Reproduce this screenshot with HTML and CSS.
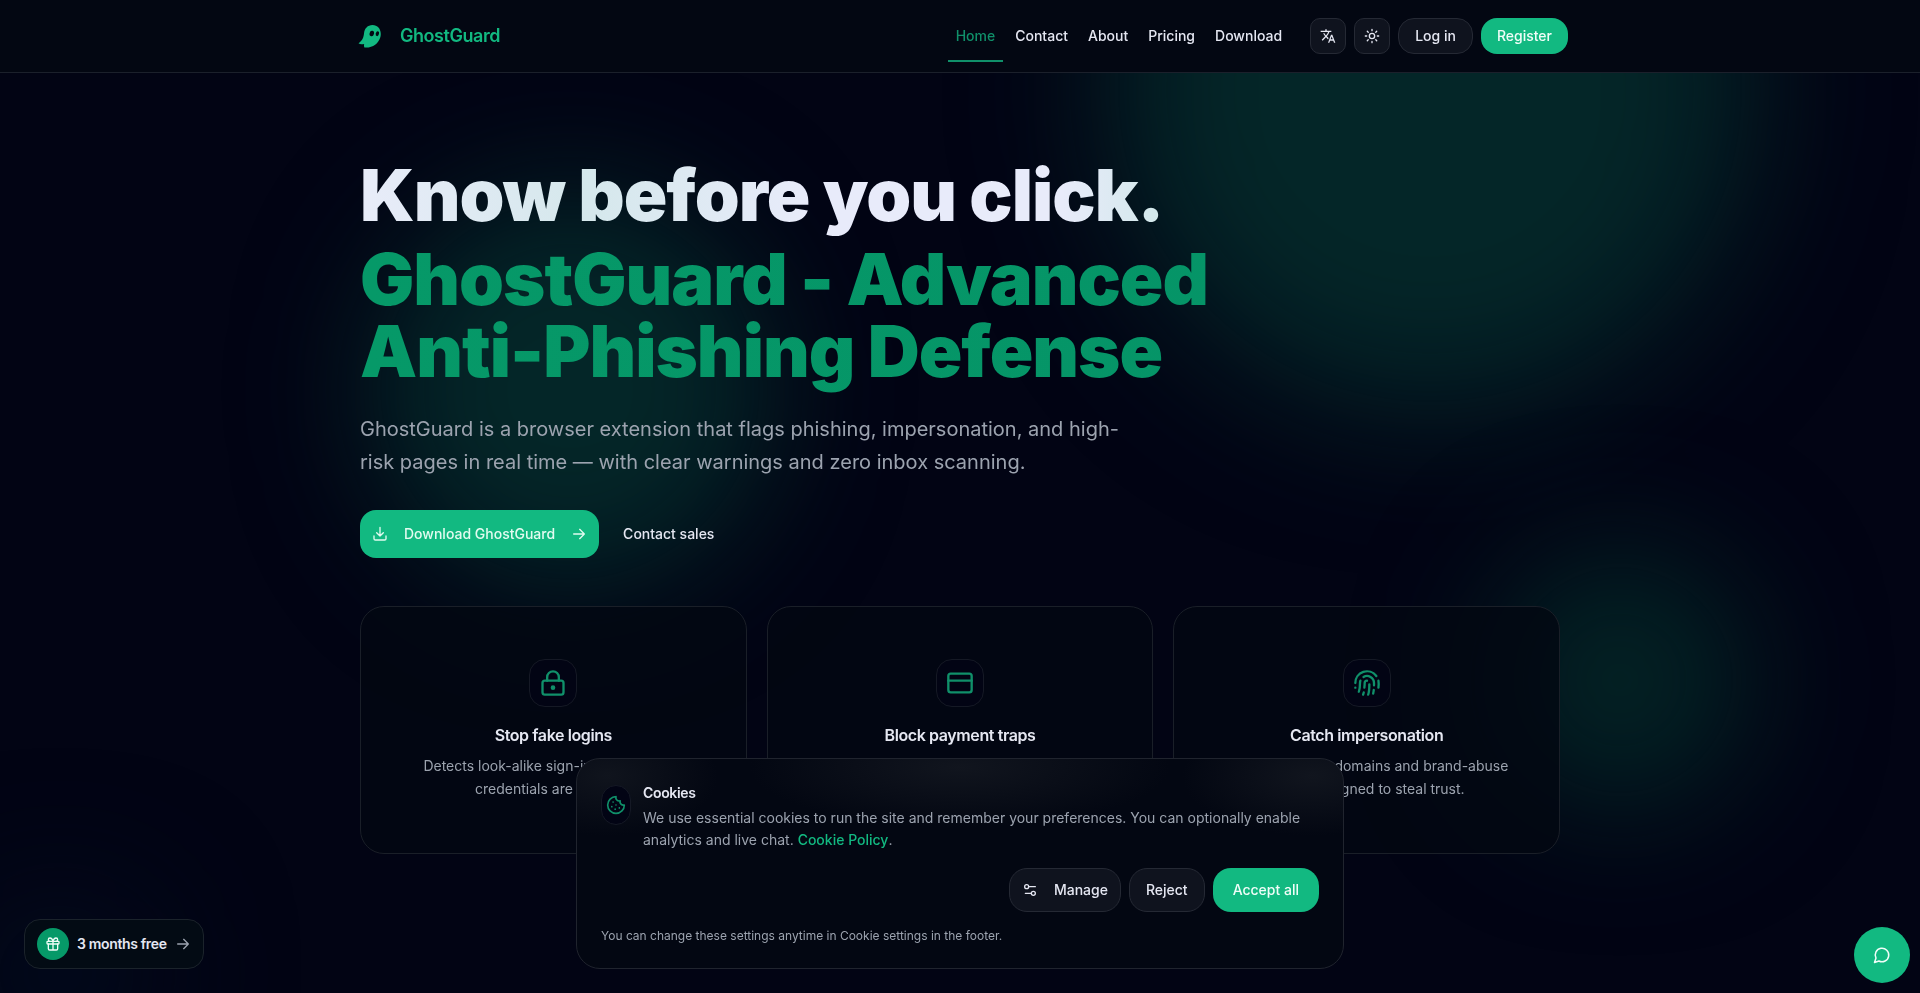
FILE: index.html
```html
<!DOCTYPE html>
<html lang="en">
<head>
	<meta charset="utf-8">
	<title>GhostGuard</title>
	<meta name="viewport" content="width=device-width, initial-scale=1">
	<link rel="stylesheet" href="styles.css">
</head>
<body>

	<!-- background glows -->
	<div class="glows" aria-hidden="true">
		<div class="glow glow-top"></div>
		<div class="glow glow-left"></div>
		<div class="glow glow-right"></div>
		<div class="glow glow-corner"></div>
	</div>

	<header class="header">
		<div class="header-inner">
			<a class="brand" href="#">
				<svg width="24" height="24" viewBox="0 0 24 24">
					<path fill="currentColor" d="M14.500 1C9.600 1 6.500 4.500 6 9.500C5.700 13 4.500 16.500 0.500 19.300C2 20.500 4 20.500 6.200 19.900C5.900 21 5.800 22.300 6.400 23.500C14 24.300 20.500 20 22.400 13C24 6.500 20.500 1 14.500 1Z"/>
					<ellipse fill="#030712" cx="13.800" cy="9.500" rx="2.200" ry="2.800" transform="rotate(15 13.800 9.500)"/>
					<ellipse fill="#030712" cx="19.400" cy="9.700" rx="1.600" ry="2.500" transform="rotate(15 19.400 9.700)"/>
				</svg>
				<span>GhostGuard</span>
			</a>
			<nav class="nav">
				<a class="active" href="#">Home</a>
				<a href="#">Contact</a>
				<a href="#">About</a>
				<a href="#">Pricing</a>
				<a href="#">Download</a>
			</nav>
			<div class="actions">
				<button class="btn btn-icon" type="button" aria-label="Language">
					<svg width="16" height="16" viewBox="0 0 24 24" fill="currentColor"><path d="M12.870 15.070l-2.540-2.510.03-.03A17.520 17.520 0 0 0 14.070 6H17V4h-7V2H8v2H1v1.990h11.170C11.500 7.920 10.440 9.750 9 11.350 8.070 10.320 7.300 9.190 6.690 8h-2c.73 1.630 1.730 3.170 2.980 4.560l-5.090 5.020L4 19l5-5 3.110 3.110.76-2.040zM18.500 10h-2L12 22h2l1.120-3h4.750L21 22h2l-4.500-12zm-2.620 7l1.620-4.330L19.120 17h-3.240z"/></svg>
				</button>
				<button class="btn btn-icon" type="button" aria-label="Theme">
					<svg class="line" width="16" height="16" viewBox="0 0 24 24"><circle cx="12" cy="12" r="4"/><path d="M12 2v2M12 20v2M4.930 4.930l1.410 1.410M17.660 17.660l1.410 1.410M2 12h2M20 12h2M6.340 17.660l-1.410 1.410M19.070 4.930l-1.410 1.410"/></svg>
				</button>
				<button class="btn" type="button">Log in</button>
				<button class="btn btn-primary" type="button">Register</button>
			</div>
		</div>
	</header>

	<main class="main">
		<h1 class="title">
			<span class="title-lead">Know before you click.</span>
			<span class="title-brand">GhostGuard - Advanced Anti-Phishing Defense</span>
		</h1>
		<p class="intro">GhostGuard is a browser extension that flags phishing, impersonation, and high-risk pages in real time — with clear warnings and zero inbox scanning.</p>
		<div class="cta">
			<a class="download" href="#">
				<svg class="line" width="16" height="16" viewBox="0 0 24 24"><path d="M12 2v13M7 10l5 5 5-5M3 15v4a2 2 0 0 0 2 2h14a2 2 0 0 0 2-2v-4"/></svg>
				<span>Download GhostGuard</span>
				<svg class="line" width="16" height="16" viewBox="0 0 24 24"><path d="M4 12h16M13 5l7 7-7 7"/></svg>
			</a>
			<a class="sales" href="#">Contact sales</a>
		</div>

		<section class="cards">
			<article class="card">
				<div class="card-icon">
					<svg class="line" width="28" height="28" viewBox="0 0 24 24"><rect x="3" y="10" width="18" height="12" rx="2"/><path d="M7 10V7a5 5 0 0 1 10 0v3"/><circle cx="12" cy="16" r="1"/></svg>
				</div>
				<h2>Stop fake logins</h2>
				<p>Detects look-alike sign-in pages before credentials are entered.</p>
			</article>
			<article class="card">
				<div class="card-icon">
					<svg class="line" width="28" height="28" viewBox="0 0 24 24"><rect x="2" y="4" width="20" height="16" rx="2"/><path d="M2 10h20"/></svg>
				</div>
				<h2>Block payment traps</h2>
				<p>Flags checkout scams and fake payment pages in real time.</p>
			</article>
			<article class="card">
				<div class="card-icon">
					<svg class="line" width="28" height="28" viewBox="0 0 24 24"><path d="M12 10a2 2 0 0 0-2 2c0 1.020-.1 2.510-.26 4M14 13.120c0 2.380 0 6.380-1 8.880M17.290 21.020c.12-.6.43-2.300.5-3.020M2 12a10 10 0 0 1 18-6M2 16h.01M21.800 16c.2-2 .131-5.354 0-6M5 19.500C5.500 18 6 15 6 12a6 6 0 0 1 .34-2M8.650 22c.21-.66.45-1.320.57-2M9 6.800a6 6 0 0 1 9 5.200v2"/></svg>
				</div>
				<h2>Catch impersonation</h2>
				<p>Spots look-alike domains and brand-abuse pages designed to steal trust.</p>
			</article>
		</section>
	</main>

	<section class="cookies" aria-label="Cookies">
		<div class="cookies-text">
			<div class="cookies-icon">
				<svg class="line" width="20" height="20" viewBox="0 0 24 24"><path d="M12 2a10 10 0 1 0 10 10 4 4 0 0 1-5-5 4 4 0 0 1-5-5M8.500 8.500v.01M16 15.500v.01M12 12v.01M11 17v.01M7 14v.01"/></svg>
			</div>
			<div>
				<h2>Cookies</h2>
				<p>We use essential cookies to run the site and remember your preferences. You can optionally enable analytics and live chat. <a href="#">Cookie Policy</a>.</p>
			</div>
		</div>
		<div class="cookies-actions">
			<button class="btn btn-large btn-manage" type="button">
				<svg class="line" width="16" height="16" viewBox="0 0 24 24"><path d="M20 7h-9M14 17H5"/><circle cx="17" cy="17" r="3"/><circle cx="7" cy="7" r="3"/></svg>
				Manage
			</button>
			<button class="btn btn-large" type="button">Reject</button>
			<button class="btn btn-large btn-primary" type="button">Accept all</button>
		</div>
		<p class="cookies-note">You can change these settings anytime in Cookie settings in the footer.</p>
	</section>

	<a class="offer" href="#">
		<span class="offer-icon">
			<svg class="line" width="16" height="16" viewBox="0 0 24 24"><rect x="3" y="8" width="18" height="4" rx="1"/><path d="M12 8v13M19 12v7a2 2 0 0 1-2 2H7a2 2 0 0 1-2-2v-7M7.500 8a2.500 2.500 0 0 1 0-5A4.800 8 0 0 1 12 8a4.800 8 0 0 1 4.500-5 2.500 2.500 0 0 1 0 5"/></svg>
		</span>
		<span>3 months free</span>
		<svg class="line offer-arrow" width="16" height="16" viewBox="0 0 24 24"><path d="M4 12h16M13 5l7 7-7 7"/></svg>
	</a>

	<button class="chat" type="button" aria-label="Chat">
		<svg class="line" width="18" height="18" viewBox="0 0 24 24"><path d="M7.900 20A9 9 0 1 0 4 16.100L2 22Z"/></svg>
	</button>

</body>
</html>
```
FILE: styles.css
```css
*{
	box-sizing: border-box;
}
body{
	margin: 0;
	min-height: 100vh;
	overflow: hidden;
	background-color: #020414;
	color: #e5e7f2;
	font: 14px/20px Inter, "Liberation Sans", sans-serif;
}
h1, h2, p{
	margin: 0;
}
a{
	color: inherit;
	text-decoration: none;
}
svg{
	flex: none;
}
.line{
	fill: none;
	stroke: currentColor;
	stroke-width: 2;
	stroke-linecap: round;
	stroke-linejoin: round;
}

/* background glows */
.glows{
	position: fixed;
	inset: 0;
	z-index: -1;
	overflow: hidden;
}
.glow{
	position: absolute;
	border-radius: 50%;
	background-color: #042628;
	filter: blur(64px);
}
.glow-top{
	top: -230px;
	right: 170px;
	width: 640px;
	height: 640px;
	filter: blur(72px);
}
.glow-left{
	top: 190px;
	left: 370px;
	width: 400px;
	height: 400px;
}
.glow-right{
	top: 550px;
	right: 170px;
	width: 260px;
	height: 260px;
	background-color: #032224;
}
.glow-corner{
	bottom: -60px;
	left: -40px;
	width: 200px;
	height: 160px;
	background-color: #020a1c;
}

/* header */
.header{
	border-bottom: 1px solid #1b202b;
	background-color: #030712;
}
.header-inner{
	display: flex;
	align-items: center;
	max-width: 1216px;
	height: 72px;
	margin: 0 auto;
	padding: 0 0 0 6px;
}
.brand{
	display: flex;
	align-items: center;
	gap: 18px;
	color: #12b981;
	font-size: 18px;
	font-weight: 600;
	letter-spacing: -0.025em;
}
.nav{
	display: flex;
	gap: 4px;
	margin-left: auto;
	font-weight: 500;
}
.nav a{
	padding: 14px 8px;
	border-bottom: 2px solid transparent;
	margin-top: 2px;
}
.nav .active{
	border-color: #10906a;
	color: #10906a;
}
.actions{
	display: flex;
	gap: 8px;
	margin-left: 20px;
}
.btn{
	display: inline-flex;
	align-items: center;
	justify-content: center;
	height: 36px;
	padding: 0 16px;
	border: 1px solid #252934;
	border-radius: 16px;
	background-color: #0f131e;
	color: #e5e7f2;
	font: inherit;
	font-weight: 500;
}
.btn-icon{
	width: 36px;
	padding: 0;
	border-radius: 10px;
}
.btn-primary{
	padding: 0 16px;
	border: 0;
	background-color: #12b981;
	color: #f0fdf8;
}
.btn-large{
	height: 44px;
	border-radius: 18px;
}
.btn-large.btn-primary{
	padding: 0 20px;
}
.btn-manage{
	gap: 16px;
	padding: 0 12px;
}

/* hero */
.main{
	max-width: 1200px;
	margin: 0 auto;
	padding: 86px 0 0;
}
.title{
	max-width: 900px;
	font-size: 72px;
	font-weight: 900;
	line-height: 72px;
	letter-spacing: -1px;
}
.title span{
	display: block;
	padding-bottom: 12px;
	-webkit-background-clip: text;
	background-clip: text;
	color: transparent;
}
.title-lead{
	background-image: linear-gradient(90deg, #e8ecf9, #d5e8ec 25%, #e8ebfa 50%, #e8ebfa 78%, #d0e8e9 90%);
}
.title-brand{
	background-image: linear-gradient(90deg, #069968, #059467);
}
.intro{
	max-width: 768px;
	margin-top: 14px;
	color: #9ca3af;
	font-size: 20px;
	line-height: 33px;
}
.cta{
	display: flex;
	align-items: center;
	gap: 24px;
	margin-top: 31px;
	font-weight: 500;
}
.download{
	display: flex;
	align-items: center;
	gap: 16px;
	height: 48px;
	padding: 0 12px;
	border-radius: 16px;
	background-color: #12b981;
	color: #e2fbf0;
}
.cards{
	display: grid;
	grid-template-columns: repeat(3, 1fr);
	gap: 20px;
	margin-top: 48px;
}
.card{
	display: flex;
	flex-direction: column;
	align-items: center;
	padding: 52px 48px 53px;
	border: 1px solid #1a1f28;
	border-radius: 24px;
	background-color: rgba(3, 7, 18, .8);
	text-align: center;
}
.card-icon{
	display: grid;
	place-items: center;
	width: 48px;
	height: 48px;
	border: 1px solid #151925;
	border-radius: 16px;
	background-color: #020414;
	color: #10906a;
}
.card h2{
	margin-top: 16px;
	font-size: 16px;
	font-weight: 600;
	line-height: 24px;
	letter-spacing: -0.025em;
}
.card p{
	margin-top: 7px;
	color: #9ca3af;
	line-height: 23px;
}

/* cookie banner */
.cookies{
	position: fixed;
	right: 16px;
	bottom: 24px;
	left: 16px;
	max-width: 768px;
	margin: 0 auto;
	padding: 24px;
	border: 1px solid #20242e;
	border-radius: 24px;
	background-color: #030712;
	background-image:
		radial-gradient(110px 60px at 4% 8%, #10141d, transparent),
		radial-gradient(210px 60px at 50% 4%, #11151e, transparent),
		radial-gradient(130px 60px at 96% 8%, #11151e, transparent);
}
.cookies-text{
	display: flex;
	align-items: flex-start;
	gap: 12px;
}
.cookies-icon{
	display: grid;
	flex: none;
	place-items: center;
	width: 30px;
	height: 40px;
	margin-top: 2px;
	border: 1px solid #151925;
	border-radius: 15px;
	background-color: #020414;
	color: #10906a;
}
.cookies h2{
	font-size: 14px;
	font-weight: 600;
	letter-spacing: -0.025em;
}
.cookies p{
	color: #9ca3af;
	line-height: 22px;
}
.cookies-text p{
	margin-top: 4px;
}
.cookies-text a{
	color: #12b981;
	font-weight: 500;
}
.cookies-actions{
	display: flex;
	justify-content: flex-end;
	gap: 8px;
	margin-top: 17px;
}
.cookies .cookies-note{
	margin-top: 16px;
	font-size: 12px;
	line-height: 16px;
}

/* floating controls */
.offer{
	position: fixed;
	left: 24px;
	bottom: 24px;
	display: flex;
	align-items: center;
	gap: 8px;
	height: 50px;
	padding: 0 12px;
	border: 1px solid #1b232b;
	border-radius: 16px;
	background-color: #030b14;
	font-weight: 600;
	letter-spacing: -0.025em;
}
.offer-icon{
	display: grid;
	place-items: center;
	width: 32px;
	height: 32px;
	border-radius: 50%;
	background-color: #069968;
	color: #f0fdf8;
}
.offer-arrow{
	color: #9ca3af;
}
.chat{
	position: fixed;
	right: 10px;
	bottom: 10px;
	display: grid;
	place-items: center;
	width: 56px;
	height: 56px;
	padding: 0;
	border: 0;
	border-radius: 50%;
	background-color: #12b981;
	color: #f0fdf8;
}
```
